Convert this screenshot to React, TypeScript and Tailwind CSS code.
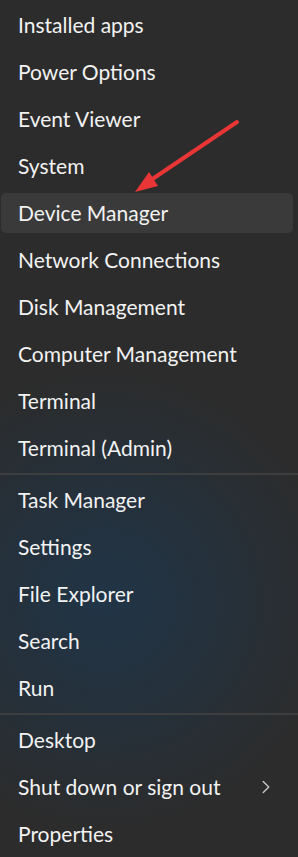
import { ChevronRight } from 'lucide-react'

const groups: string[][] = [
  [
    'Installed apps',
    'Power Options',
    'Event Viewer',
    'System',
    'Device Manager',
    'Network Connections',
    'Disk Management',
    'Computer Management',
    'Terminal',
    'Terminal (Admin)',
  ],
  ['Task Manager', 'Settings', 'File Explorer', 'Search', 'Run'],
  ['Desktop', 'Shut down or sign out', 'Properties'],
]

function MenuItem({ label }: { label: string }) {
  const active = label === 'Device Manager'
  const hasSub = label === 'Shut down or sign out'
  return (
    <li className="h-[47px] flex items-center px-[1px]">
      <div
        className={`h-[40px] w-[292px] flex items-center justify-between pl-[17px] pr-[16px] rounded-[5px] ${
          active ? 'bg-[#3a3a3a]' : ''
        }`}
      >
        <span className="text-[21px] text-[#f2f2f2] leading-none">{label}</span>
        {hasSub && <ChevronRight className="w-[22px] h-[22px] text-[#c8c8c8]" strokeWidth={1.5} />}
      </div>
    </li>
  )
}

export default function App() {
  return (
    <div
      className="relative w-[298px] h-[857px] overflow-hidden bg-[#2c2c2c] bg-[radial-gradient(circle_at_105px_600px,#213547_0px,#25303a_120px,#2c2c2c_230px)] pt-[1px]"
      style={{ fontFamily: 'Lato, "Noto Sans", sans-serif' }}
    >
      {groups.map((items, gi) => (
        <div key={gi}>
          {gi > 0 && <div className="h-[5px] flex items-center"><div className="h-[2px] w-full bg-[#3e3e3e]" /></div>}
          <ul>
            {items.map(label => (
              <MenuItem key={label} label={label} />
            ))}
          </ul>
        </div>
      ))}

      {/* red annotation arrow */}
      <svg className="absolute left-0 top-0 pointer-events-none" width="298" height="857">
        <line x1="237" y1="122" x2="148" y2="182" stroke="#e83535" strokeWidth="4" strokeLinecap="round" />
        <polygon points="135,192 149,172 158,186" fill="#e83535" />
      </svg>
    </div>
  )
}
